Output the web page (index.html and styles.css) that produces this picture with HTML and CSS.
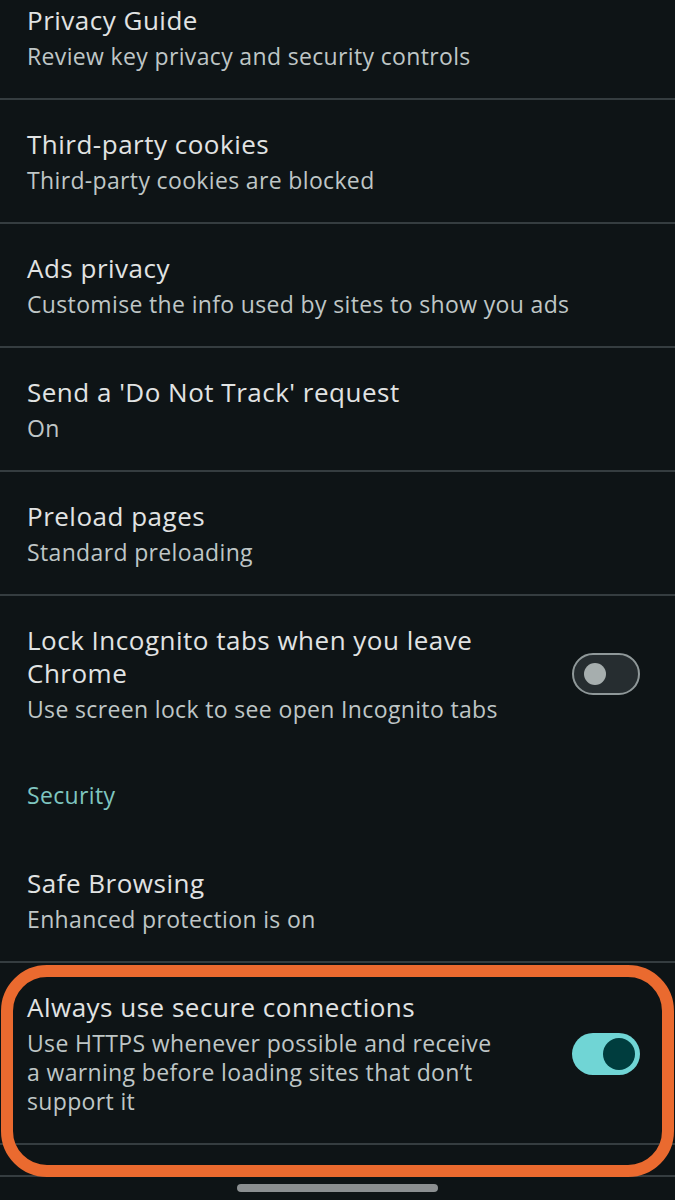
FILE: index.html
```html
<!DOCTYPE html>
<html lang="en">
<head>
<meta charset="utf-8">
<title>Privacy and security</title>
<link rel="stylesheet" href="styles.css">
</head>
<body>
<div class="screen">
  <div class="row first">
    <div class="text">
      <div class="title">Privacy Guide</div>
      <div class="sub">Review key privacy and security controls</div>
    </div>
  </div>
  <div class="divider"></div>
  <div class="row">
    <div class="text">
      <div class="title">Third-party cookies</div>
      <div class="sub">Third-party cookies are blocked</div>
    </div>
  </div>
  <div class="divider"></div>
  <div class="row">
    <div class="text">
      <div class="title">Ads privacy</div>
      <div class="sub">Customise the info used by sites to show you ads</div>
    </div>
  </div>
  <div class="divider"></div>
  <div class="row">
    <div class="text">
      <div class="title">Send a 'Do Not Track' request</div>
      <div class="sub">On</div>
    </div>
  </div>
  <div class="divider"></div>
  <div class="row">
    <div class="text">
      <div class="title">Preload pages</div>
      <div class="sub">Standard preloading</div>
    </div>
  </div>
  <div class="divider"></div>
  <div class="row">
    <div class="text narrow">
      <div class="title">Lock Incognito tabs when you leave Chrome</div>
      <div class="sub">Use screen lock to see open Incognito tabs</div>
    </div>
    <div class="toggle off"><span class="knob"></span></div>
  </div>
  <div class="section">Security</div>
  <div class="row safe">
    <div class="text">
      <div class="title">Safe Browsing</div>
      <div class="sub">Enhanced protection is on</div>
    </div>
  </div>
  <div class="divider"></div>
  <div class="highlight">
    <div class="row">
      <div class="text narrow">
        <div class="title">Always use secure connections</div>
        <div class="sub">Use HTTPS whenever possible and receive a warning before loading sites that don’t support it</div>
      </div>
      <div class="toggle on"><span class="knob"></span></div>
    </div>
    <div class="divider"></div>
    <div class="spacer"></div>
  </div>
  <div class="divider"></div>
  <div class="homebar"><span class="pill"></span></div>
</div>
</body>
</html>
```
FILE: styles.css
```css
html, body {
  margin: 0;
  padding: 0;
  background: #0e1416;
}
body {
  font-family: "Open Sans", "Noto Sans", "Liberation Sans", sans-serif;
  color: #e1e3e3;
}
.screen {
  width: 675px;
  height: 1200px;
  overflow: hidden;
  background: #0e1416;
}
.row {
  display: flex;
  align-items: center;
  padding: 28px 0 27px 27px;
}
.row.first {
  padding-top: 4px;
  padding-bottom: 27px;
}
.text {
  flex: 1;
  display: flex;
  flex-direction: column;
  gap: 5px;
}
.text.narrow {
  flex: none;
  width: 475px;
}
.title {
  font-size: 26px;
  line-height: 33px;
  letter-spacing: 0.5px;
  color: #e1e3e3;
}
.sub {
  font-size: 23px;
  line-height: 29px;
  letter-spacing: 0.35px;
  color: #bfc6c6;
}
.divider {
  height: 2px;
  background: #353d40;
}
.section {
  padding: 30px 27px 0 27px;
  font-size: 23px;
  line-height: 29px;
  letter-spacing: 0.35px;
  color: #7fc6c0;
}
.row.safe {
  padding-top: 57px;
}
.toggle {
  margin-left: auto;
  margin-right: 35px;
  width: 68px;
  height: 42px;
  box-sizing: border-box;
  border-radius: 21px;
  position: relative;
  flex: none;
}
.toggle.off {
  border: 2px solid #8f9899;
  background: #262d30;
}
.toggle.off .knob {
  position: absolute;
  left: 10px;
  top: 8px;
  width: 22px;
  height: 22px;
  border-radius: 50%;
  background: #a6aeae;
}
.toggle.on {
  background: #70d5d5;
}
.toggle.on .knob {
  position: absolute;
  right: 5px;
  top: 5px;
  width: 32px;
  height: 32px;
  border-radius: 50%;
  background: #003d3e;
}
.highlight {
  position: relative;
}
.highlight::after {
  content: "";
  position: absolute;
  left: 1px;
  right: 1px;
  top: 2px;
  bottom: -2px;
  border: 12px solid #ea6a2f;
  border-radius: 46px;
  pointer-events: none;
}
.spacer {
  height: 30px;
}
.homebar {
  display: flex;
  justify-content: center;
  padding-top: 7px;
}
.pill {
  width: 201px;
  height: 8px;
  border-radius: 4px;
  background: #8b8f91;
}
```
